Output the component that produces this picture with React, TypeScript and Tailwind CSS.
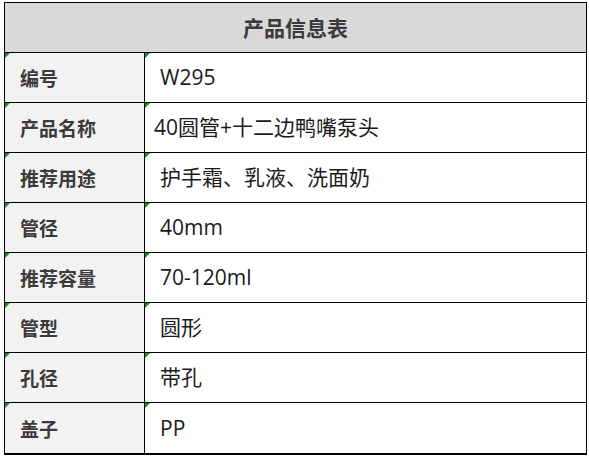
const rows = [
  { label: '编号', value: 'W295' },
  { label: '产品名称', value: '40圆管+十二边鸭嘴泵头', tight: true },
  { label: '推荐用途', value: '护手霜、乳液、洗面奶' },
  { label: '管径', value: '40mm' },
  { label: '推荐容量', value: '70-120ml' },
  { label: '管型', value: '圆形' },
  { label: '孔径', value: '带孔' },
  { label: '盖子', value: 'PP' },
];

function Marker() {
  return (
    <span className="absolute left-0 top-0 w-0 h-0 border-t-[5px] border-t-[#1c8c1c] border-r-[5px] border-r-transparent" />
  );
}

export default function App() {
  return (
    <div
      className="relative w-[589px] h-[460px] bg-white overflow-hidden"
      style={{ fontFamily: '"Noto Sans CJK SC", "Noto Sans", sans-serif' }}
    >
      <div className="pt-[2px] pl-[4px]">
        <div className="w-[583px] border border-b-2 border-black">
          <div className="h-[50px] bg-[#d9d9d9] border-b border-black flex items-center justify-center">
            <span className="text-[21px] font-bold text-[#3a3a3a] leading-none">产品信息表</span>
          </div>
          {rows.map((row, idx) => (
            <div
              key={row.label}
              className={
                idx === rows.length - 1
                  ? 'grid grid-cols-[140px_1fr] h-[50px]'
                  : 'grid grid-cols-[140px_1fr] h-[50px] border-b border-black'
              }
            >
              <div className="relative bg-[#f2f2f2] border-r border-black flex items-center pl-[15px]">
                <Marker />
                <span className="text-[19px] font-bold text-[#3a3a3a] leading-none">{row.label}</span>
              </div>
              <div className={row.tight ? 'relative flex items-center pl-[9px]' : 'relative flex items-center pl-[15px]'}>
                <Marker />
                <span
                  className="text-[21px] text-[#1a1a1a] leading-none"
                  style={{ fontFamily: '"Open Sans", "Noto Sans CJK SC", sans-serif' }}
                >
                  {row.value}
                </span>
              </div>
            </div>
          ))}
        </div>
      </div>
    </div>
  );
}
